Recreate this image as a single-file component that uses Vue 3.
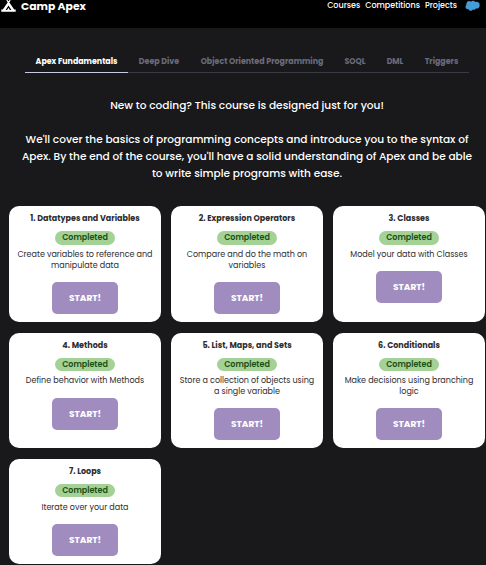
<script setup>
const links = ['Courses', 'Competitions', 'Projects']
const tabs = ['Apex Fundamentals', 'Deep Dive', 'Object Oriented Programming', 'SOQL', 'DML', 'Triggers']
const lessons = [
  { title: '1. Datatypes and Variables', text: 'Create variables to reference and\nmanipulate data' },
  { title: '2. Expression Operators', text: 'Compare and do the math on\nvariables' },
  { title: '3. Classes', text: 'Model your data with Classes' },
  { title: '4. Methods', text: 'Define behavior with Methods' },
  { title: '5. List, Maps, and Sets', text: 'Store a collection of objects using\na single variable' },
  { title: '6. Conditionals', text: 'Make decisions using branching\nlogic' },
  { title: '7. Loops', text: 'Iterate over your data' },
]
</script>

<template>
  <div class="page">
    <header class="topbar">
      <div class="brand">
        <svg class="tent" viewBox="0 0 15 13">
          <path d="M5.8 0.2 L7.5 2.3 L9.2 0.2" fill="none" stroke="#fff" stroke-width="1.3" />
          <path fill-rule="evenodd" d="M7.5 1.2 L13.2 9.5 H14.7 V11.8 H0.3 V9.5 H1.8 Z M7.5 5.4 L4.6 9.9 H6.1 L7.5 7.7 L8.9 9.9 H10.4 Z" fill="#fff" />
        </svg>
        <span class="name">Camp Apex</span>
      </div>
      <nav class="links">
        <a v-for="link in links" :key="link">{{ link }}</a>
        <svg class="cloud" viewBox="0 0 14 11">
          <path d="M1.5 2.7 C1.9 .8 4.3 .3 5.6 1.5 C6.7 .1 8.7 .2 9.4 1.8 C11.8 .8 13.8 2.5 13.7 4.7 C13.7 7 12 8.2 10.2 7.8 C9.5 9 8.3 9.2 7.4 8.7 C6.4 10.5 4.1 10.3 3.3 8.5 C1.4 8.8 .1 7.4 .5 5.8 C.6 5.2 .9 4.9 1.3 4.6 C1 4 1.2 3.2 1.5 2.7 Z" fill="#439bd8" />
        </svg>
      </nav>
    </header>

    <main>
      <div class="tabs">
        <div v-for="(tab, i) in tabs" :key="tab" class="tab" :class="{ active: i === 0 }">{{ tab }}</div>
      </div>
      <div class="intro">
        <p class="lead">New to coding? This course is designed just for you!</p>
        <p>We'll cover the basics of programming concepts and introduce you to the syntax of</p>
        <p>Apex. By the end of the course, you'll have a solid understanding of Apex and be able</p>
        <p>to write simple programs with ease.</p>
      </div>
      <section class="grid">
        <article v-for="lesson in lessons" :key="lesson.title" class="card">
          <h2>{{ lesson.title }}</h2>
          <span class="pill">Completed</span>
          <p class="text">{{ lesson.text }}</p>
          <button>START!</button>
        </article>
      </section>
    </main>
  </div>
</template>

<style>
body { margin: 0; background: #19191b; }
</style>

<style scoped>
.page { height: 565px; overflow: hidden; background: #19191b; color: #fff; font-family: Poppins, Inter, "Open Sans", sans-serif; }
.topbar { height: 28px; background: #000; display: flex; justify-content: space-between; align-items: flex-start; box-sizing: border-box; padding: 0 6px 0 1px; }
.brand { display: flex; gap: 5px; }
.tent { width: 15px; height: 13px; }
.name { font-size: 10.8px; line-height: 13px; font-weight: 700; }
.links { display: flex; gap: 5px; font-size: 8px; line-height: 12px; font-weight: 500; }
.cloud { width: 15px; height: 12px; margin-left: 3px; }
.tabs { display: grid; grid-template-columns: 103px 62px 144px 42px 38px 55px; width: 444px; margin: 22px 0 0 25px; box-sizing: border-box; height: 23px; border-bottom: 1px solid #3a3b44; }
.tab { height: 23px; box-sizing: border-box; text-align: center; white-space: nowrap; color: #696b7c; font-size: 7.9px; line-height: 23px; font-weight: 700; }
.tab.active { color: #fff; border-bottom: 1px solid #c5cbe3; }
.intro { padding: 24px 0 0 8px; text-align: center; font-size: 10.58px; font-weight: 500; }
.intro p { margin: 0; line-height: 17px; height: 17px; white-space: nowrap; }
.intro .lead { margin-bottom: 17px; }
.grid { display: grid; grid-template-columns: repeat(3, 152px); grid-template-rows: 115.6px 115.6px 105px; gap: 10.8px 10px; margin: 24.2px 0 0 9px; }
.card { display: flex; flex-direction: column; align-items: center; background: #fff; border-radius: 10px; color: #2d2d2f; box-sizing: border-box; padding-top: 7px; }
h2 { margin: 0; font-size: 8px; line-height: 12px; height: 12px; font-weight: 700; }
.pill { margin-top: 6.1px; width: 60px; height: 13.3px; border-radius: 7px; background: #a3d196; color: #195013; font-size: 8px; line-height: 13px; font-weight: 600; text-align: center; }
.text { margin: 5.4px 0 0; font-size: 8px; line-height: 10.6px; text-align: center; white-space: pre; }
button { margin-top: 10.7px; width: 66px; height: 32px; border: 0; padding: 0; border-radius: 5px; background: #a18cbf; color: #fff; font: 700 9px/33px Poppins, Inter, sans-serif; }
</style>
